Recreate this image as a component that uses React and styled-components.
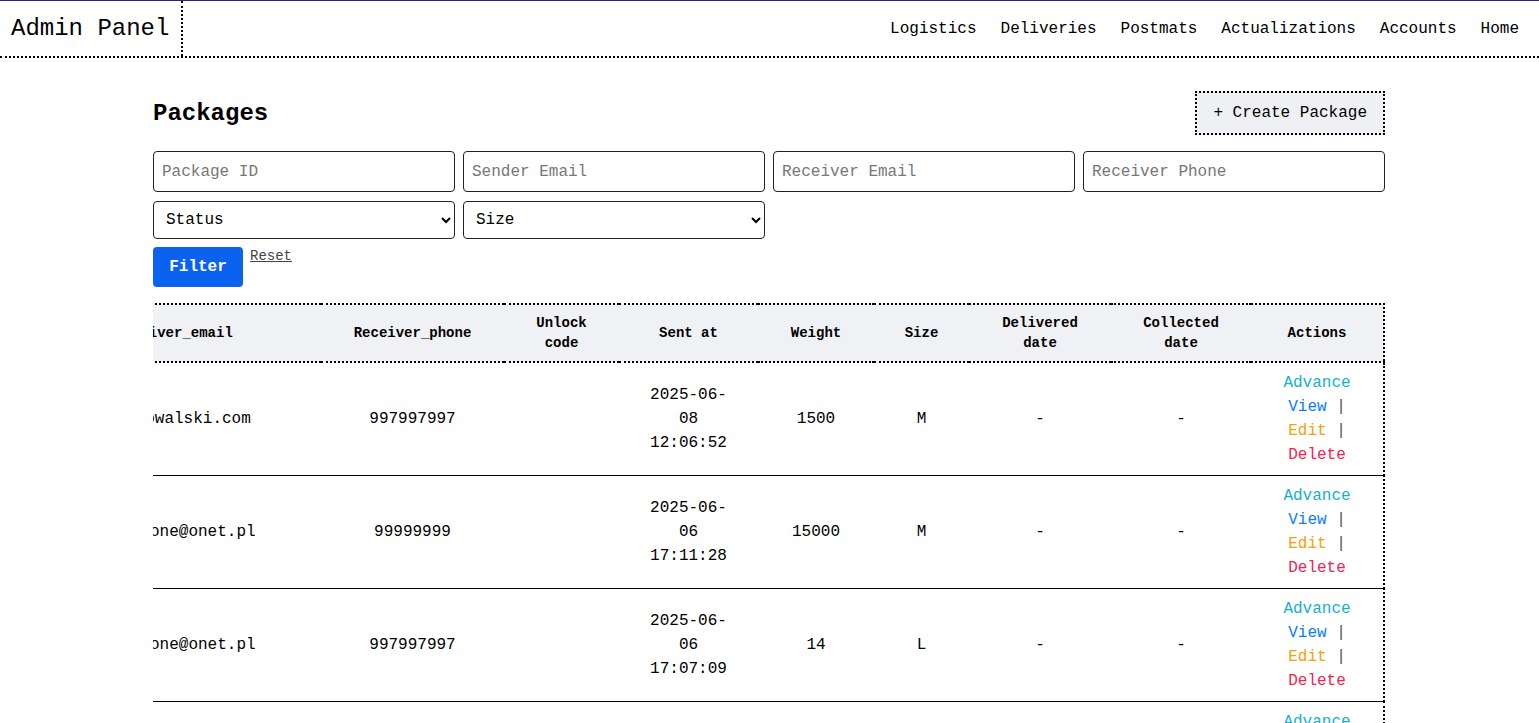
import React, { useLayoutEffect, useRef } from 'react';
import styled, { createGlobalStyle } from 'styled-components';

const mono = `"Liberation Mono", "Courier New", monospace`;

const GlobalStyle = createGlobalStyle`
    body {
        margin: 0;
        font-family: ${mono};
        color: #000;
        background: #fff;
    }
`;

const NavBar = styled.header`
    display: flex;
    align-items: stretch;
    justify-content: space-between;
    height: 55px;
    border-top: 1px solid #3b1d78;
    border-bottom: 2px dotted #000;
`;

const Brand = styled.div`
    display: flex;
    align-items: center;
    padding: 0 12px 0 11px;
    border-right: 2px dotted #000;
    font-size: 24px;
`;

const NavLinks = styled.nav`
    display: flex;
    align-items: center;
    gap: 24px;
    padding-right: 20px;
`;

const NavLink = styled.a`
    font-size: 16px;
    color: #000;
    text-decoration: none;
    cursor: pointer;
`;

const Main = styled.main`
    width: 1232px;
    margin-left: calc((100% - 1233px) / 2);
    padding-top: 33px;
`;

const PageHeader = styled.div`
    display: flex;
    align-items: center;
    justify-content: space-between;
    margin-bottom: 16px;
`;

const Title = styled.h2`
    margin: 0;
    font-size: 24px;
    font-weight: bold;
`;

const CreateButton = styled.button`
    font-family: ${mono};
    font-size: 16px;
    line-height: 20px;
    padding: 10px 16px;
    background: #eff0f3;
    border: 2px dotted #000;
    color: #000;
    cursor: pointer;
`;

const FilterGrid = styled.div`
    display: grid;
    grid-template-columns: repeat(4, 1fr);
    column-gap: 8px;
    row-gap: 9px;
`;

const TextInput = styled.input`
    height: 41px;
    box-sizing: border-box;
    padding: 0 8px;
    font-family: ${mono};
    font-size: 16px;
    border: 1px solid #222;
    border-radius: 4px;
    outline: none;

    &::placeholder {
        color: #777;
    }
`;

const Select = styled.select`
    height: 38px;
    box-sizing: border-box;
    padding: 0 8px;
    font-family: ${mono};
    font-size: 16px;
    color: #000;
    background: #fff;
    border: 1px solid #222;
    border-radius: 4px;
`;

const FilterActions = styled.div`
    display: flex;
    align-items: flex-start;
    gap: 7px;
    margin-top: 8px;
`;

const FilterButton = styled.button`
    width: 90px;
    height: 40px;
    font-family: ${mono};
    font-size: 16px;
    font-weight: bold;
    color: #fff;
    background: #0b62f0;
    border: none;
    border-radius: 4px;
    cursor: pointer;
`;

const ResetLink = styled.a`
    font-size: 14px;
    line-height: 18px;
    color: #444;
    text-decoration: underline;
    cursor: pointer;
`;

const TableScroll = styled.div`
    margin-top: 16px;
    overflow-x: auto;
    scrollbar-width: none;

    &::-webkit-scrollbar {
        display: none;
    }
`;

const Table = styled.table`
    table-layout: fixed;
    border-collapse: collapse;
    border: 2px dotted #000;
    width: max-content;
`;

const Th = styled.th`
    width: ${({ $w }) => $w}px;
    box-sizing: border-box;
    padding: 8px 16px;
    font-size: 14px;
    line-height: 20px;
    font-weight: bold;
    text-align: center;
    background: #f0f1f5;
    border-bottom: 2px dotted #000;
`;

const Td = styled.td`
    padding: 8px 16px;
    font-size: 16px;
    line-height: 24px;
    text-align: center;
    vertical-align: middle;
    border-bottom: 1px solid #000;
`;

const DatePart = styled.span`
    display: block;
`;

const ActionLink = styled.a`
    color: ${({ $color }) => $color};
    text-decoration: none;
    cursor: pointer;
`;

const Sep = styled.span`
    color: #555;
`;

const columns = [
    ['ID', 80],
    ['Sender_email', 260],
    ['Status', 140],
    ['Receiver_email', 294],
    ['Receiver_phone', 183],
    ['Unlock code', 115],
    ['Sent at', 139],
    ['Weight', 116],
    ['Size', 95],
    ['Delivered date', 142],
    ['Collected date', 140],
    ['Actions', 133],
];

const packages = [
    { id: 14, sender: 'admin@postmat.pl', status: 'Created', receiver: 'jan@kowalski.com', phone: '997997997', sent: ['2025-06-', '08', '12:06:52'], weight: 1500, size: 'M' },
    { id: 13, sender: 'admin@postmat.pl', status: 'Created', receiver: 'ann.phone@onet.pl', phone: '99999999', sent: ['2025-06-', '06', '17:11:28'], weight: 15000, size: 'M' },
    { id: 12, sender: 'admin@postmat.pl', status: 'Created', receiver: 'ann.phone@onet.pl', phone: '997997997', sent: ['2025-06-', '06', '17:07:09'], weight: 14, size: 'L' },
    { id: 11, sender: 'admin@postmat.pl', status: 'Created', receiver: 'jan@kowalski.com', phone: '997997997', sent: ['2025-06-', '05', '09:41:10'], weight: 200, size: 'S' },
];

export default function App() {
    const scrollRef = useRef(null);

    // table overflows its container: keep it scrolled to the right end
    useLayoutEffect(() => {
        const el = scrollRef.current;
        if (el) el.scrollLeft = el.scrollWidth;
    }, []);

    return (
        <>
            <GlobalStyle />
            <NavBar>
                <Brand>Admin Panel</Brand>
                <NavLinks>
                    <NavLink>Logistics</NavLink>
                    <NavLink>Deliveries</NavLink>
                    <NavLink>Postmats</NavLink>
                    <NavLink>Actualizations</NavLink>
                    <NavLink>Accounts</NavLink>
                    <NavLink>Home</NavLink>
                </NavLinks>
            </NavBar>
            <Main>
                <PageHeader>
                    <Title>Packages</Title>
                    <CreateButton>+ Create Package</CreateButton>
                </PageHeader>
                <FilterGrid>
                    <TextInput placeholder="Package ID" />
                    <TextInput placeholder="Sender Email" />
                    <TextInput placeholder="Receiver Email" />
                    <TextInput placeholder="Receiver Phone" />
                    <Select defaultValue="">
                        <option value="">Status</option>
                    </Select>
                    <Select defaultValue="">
                        <option value="">Size</option>
                    </Select>
                </FilterGrid>
                <FilterActions>
                    <FilterButton>Filter</FilterButton>
                    <ResetLink>Reset</ResetLink>
                </FilterActions>
                <TableScroll ref={scrollRef}>
                    <Table>
                        <thead>
                            <tr>
                                {columns.map(([name, w]) => (
                                    <Th key={name} $w={w}>{name}</Th>
                                ))}
                            </tr>
                        </thead>
                        <tbody>
                            {packages.map((p) => (
                                <tr key={p.id}>
                                    <Td>{p.id}</Td>
                                    <Td>{p.sender}</Td>
                                    <Td>{p.status}</Td>
                                    <Td>{p.receiver}</Td>
                                    <Td>{p.phone}</Td>
                                    <Td></Td>
                                    <Td>
                                        {p.sent.map((part) => (
                                            <DatePart key={part}>{part}</DatePart>
                                        ))}
                                    </Td>
                                    <Td>{p.weight}</Td>
                                    <Td>{p.size}</Td>
                                    <Td>-</Td>
                                    <Td>-</Td>
                                    <Td>
                                        <ActionLink $color="#17b0cc">Advance</ActionLink>{' '}
                                        <ActionLink $color="#0a7cff">View</ActionLink> <Sep>|</Sep>{' '}
                                        <ActionLink $color="#f5a00c">Edit</ActionLink> <Sep>|</Sep>{' '}
                                        <ActionLink $color="#f5224f">Delete</ActionLink>
                                    </Td>
                                </tr>
                            ))}
                        </tbody>
                    </Table>
                </TableScroll>
            </Main>
        </>
    );
}
